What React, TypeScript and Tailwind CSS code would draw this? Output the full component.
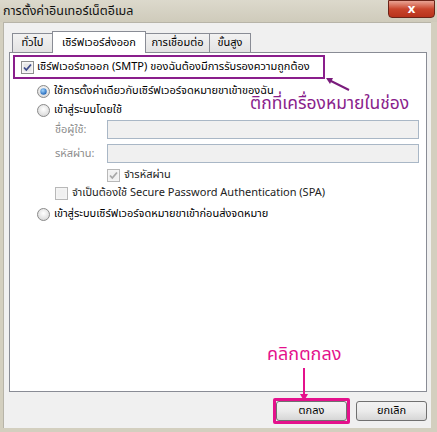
import React from "react";

const font = { fontFamily: "Tahoma, 'Noto Sans Thai', 'Noto Sans', 'DejaVu Sans', sans-serif" };

function Radio({ checked }: { checked?: boolean }) {
  return (
    <svg width="13" height="13" viewBox="0 0 13 13" className="shrink-0">
      <defs>
        <radialGradient id={checked ? "rg1" : "rg0"} cx="50%" cy="40%" r="60%">
          <stop offset="0%" stopColor="#ffffff" />
          <stop offset="100%" stopColor="#d8d8d8" />
        </radialGradient>
        <radialGradient id="dot" cx="40%" cy="35%" r="70%">
          <stop offset="0%" stopColor="#9fd5ff" />
          <stop offset="100%" stopColor="#1a5fb4" />
        </radialGradient>
      </defs>
      <circle cx="6.5" cy="6.5" r="6" fill={`url(#${checked ? "rg1" : "rg0"})`} stroke="#8a8a8a" strokeWidth="1" />
      {checked && <circle cx="6.5" cy="6.5" r="3.2" fill="url(#dot)" />}
    </svg>
  );
}

function Check({ checked, disabled }: { checked?: boolean; disabled?: boolean }) {
  return (
    <svg width="13" height="13" viewBox="0 0 13 13" className="shrink-0">
      <rect x="0.5" y="0.5" width="12" height="12" fill={disabled ? "#f4f4f4" : "#f6f6f6"} stroke={disabled ? "#b8b8b8" : "#8e8f8f"} />
      <rect x="2.5" y="2.5" width="8" height="8" fill={disabled ? "#f0f0f0" : "#e6e6e6"} />
      {checked && (
        <path d="M3 6.5 L5.3 9 L10 3.5" fill="none" stroke={disabled ? "#a8a8a8" : "#3c4a8a"} strokeWidth="1.8" />
      )}
    </svg>
  );
}

const tabInactive =
  "h-[19px] border border-b-0 border-[#898c95] bg-gradient-to-b from-[#f2f2f2] to-[#e3e3e3] flex items-center justify-center";

export default function App() {
  return (
    <div className="relative w-[437px] h-[432px] bg-[#d3cfbf] overflow-hidden text-[11px] leading-[14px] text-black whitespace-nowrap" style={font}>
      {/* title bar */}
      <div className="h-[22px] flex items-start justify-between bg-gradient-to-b from-[#dcd9cc] to-[#cfcbbb]">
        <div className="pl-[3px] pt-[4px] text-[12.5px] leading-[16px] text-[#111]">การตั้งค่าอินเทอร์เน็ตอีเมล</div>
        <div className="mr-[2px] w-[47px] h-[18px] rounded-b-[4px] border border-[#6b2418] bg-gradient-to-b from-[#e8a293] via-[#c9452c] to-[#b8321c] flex items-center justify-center text-white text-[13px] font-bold leading-none">
          x
        </div>
      </div>
      {/* body */}
      <div className="ml-[3px] w-[428px] h-[406px] bg-[#f0f0f0] border-t border-l border-[#b7b4a8] flex flex-col">
        {/* tabs */}
        <div className="flex items-end h-[29px] pl-[8px]">
          <div className={`${tabInactive} w-[41px]`}>ทั่วไป</div>
          <div className="h-[22px] w-[94px] border border-b-0 border-[#898c95] bg-white flex items-center justify-center -ml-[1px] relative z-10 -mb-[1px]">เซิร์ฟเวอร์ส่งออก</div>
          <div className={`${tabInactive} w-[64px] border-l-0`}>การเชื่อมต่อ</div>
          <div className={`${tabInactive} w-[41px] border-l-0`}>ขั้นสูง</div>
        </div>
        {/* tab page */}
        <div className="ml-[5px] w-[418px] h-[340px] bg-white border border-[#898c95] flex flex-col pt-[2px] pl-[3px]">
          <div className="w-[312px] h-[24px] border-2 border-[#8a1e8c] flex items-center pl-[6px] gap-[3px]">
            <Check checked />
            <span>เซิร์ฟเวอร์ขาออก (SMTP) ของฉันต้องมีการรับรองความถูกต้อง</span>
          </div>
          <div className="flex items-center gap-[4px] pl-[24px] mt-[3px] h-[18px]">
            <Radio checked />
            <span>ใช้การตั้งค่าเดียวกับเซิร์ฟเวอร์จดหมายขาเข้าของฉัน</span>
          </div>
          <div className="flex items-center gap-[4px] pl-[24px] mt-[1px] h-[18px]">
            <Radio />
            <span>เข้าสู่ระบบโดยใช้</span>
          </div>
          <div className="flex items-center pl-[42px] mt-[1px] h-[19px]">
            <span className="w-[52px] text-[#8d8d8d]">ชื่อผู้ใช้:</span>
            <div className="w-[312px] h-[19px] border border-[#a9b7c6] bg-[#f0f0f0]" />
          </div>
          <div className="flex items-center pl-[42px] mt-[5px] h-[19px]">
            <span className="w-[52px] text-[#8d8d8d]">รหัสผ่าน:</span>
            <div className="w-[312px] h-[19px] border border-[#a9b7c6] bg-[#f0f0f0]" />
          </div>
          <div className="flex items-center gap-[4px] pl-[94px] mt-[4px] h-[16px]">
            <Check checked disabled />
            <span className="text-[#222]">จำรหัสผ่าน</span>
          </div>
          <div className="flex items-center gap-[4px] pl-[42px] mt-[2px] h-[16px]">
            <Check disabled />
            <span className="text-[#222]">จำเป็นต้องใช้ Secure Password Authentication (SPA)</span>
          </div>
          <div className="flex items-center gap-[4px] pl-[24px] mt-[4px] h-[18px]">
            <Radio />
            <span>เข้าสู่ระบบเซิร์ฟเวอร์จดหมายขาเข้าก่อนส่งจดหมาย</span>
          </div>
        </div>
        {/* buttons */}
        <div className="flex justify-end gap-[9px] pr-[4px] mt-[9px]">
          <div className="relative">
            <div className="absolute -inset-[3px] border-[3px] border-[#e4118c] rounded-[2px]" />
            <div className="w-[71px] h-[20px] rounded-[3px] border border-[#707070] bg-gradient-to-b from-[#f2f2f2] via-[#ebebeb] to-[#d6d6d6] flex items-center justify-center">ตกลง</div>
          </div>
          <div className="w-[71px] h-[20px] rounded-[3px] border border-[#707070] bg-gradient-to-b from-[#f2f2f2] via-[#ebebeb] to-[#d6d6d6] flex items-center justify-center">ยกเลิก</div>
        </div>
      </div>

      {/* annotation 1 */}
      <div className="absolute left-[250px] top-[93px] text-[17.5px] leading-[22px] text-[#8a1e8c]">ติกที่เครื่องหมายในช่อง</div>
      <svg className="absolute left-0 top-0" width="437" height="432">
        <line x1="349" y1="90" x2="329" y2="80" stroke="#7a1c7c" strokeWidth="2" />
        <path d="M326 78 L333 78 L330 84 Z" fill="#7a1c7c" />
        <line x1="304" y1="368" x2="304" y2="396" stroke="#e4118c" strokeWidth="2" />
        <path d="M300 394 L308 394 L304 401 Z" fill="#e4118c" />
      </svg>
      <div className="absolute left-[267px] top-[343px] text-[18px] leading-[24px] text-[#e4118c]">คลิกตกลง</div>
    </div>
  );
}
